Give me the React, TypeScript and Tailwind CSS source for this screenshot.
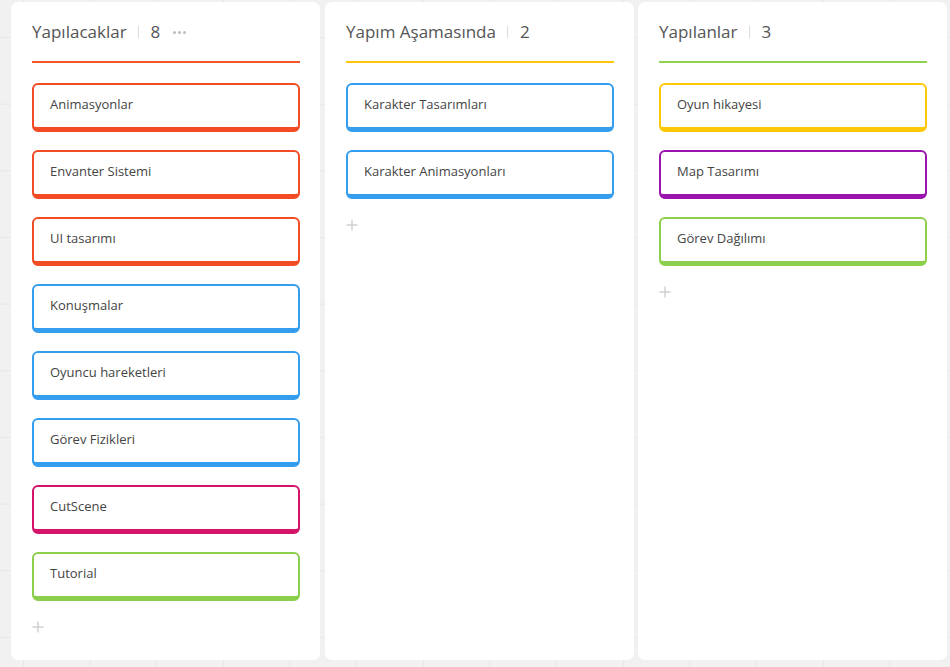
import React from "react";

type Card = { title: string; color: string };
type Column = { title: string; count: number; line: string; cards: Card[]; dots?: boolean; ml: string };

const RED = "border-[#f34b23]";
const BLUE = "border-[#349ded]";
const PINK = "border-[#d4136b]";
const GREEN = "border-[#8ccf4d]";
const YELLOW = "border-[#fcc808]";
const PURPLE = "border-[#9a14ad]";

const columns: Column[] = [
  {
    title: "Yapılacaklar",
    count: 8,
    line: "bg-[#f4562c]",
    dots: true,
    ml: "ml-0",
    cards: [
      { title: "Animasyonlar", color: RED },
      { title: "Envanter Sistemi", color: RED },
      { title: "UI tasarımı", color: RED },
      { title: "Konuşmalar", color: BLUE },
      { title: "Oyuncu hareketleri", color: BLUE },
      { title: "Görev Fizikleri", color: BLUE },
      { title: "CutScene", color: PINK },
      { title: "Tutorial", color: GREEN },
    ],
  },
  {
    title: "Yapım Aşamasında",
    count: 2,
    line: "bg-[#fdc60a]",
    ml: "ml-[5px]",
    cards: [
      { title: "Karakter Tasarımları", color: BLUE },
      { title: "Karakter Animasyonları", color: BLUE },
    ],
  },
  {
    title: "Yapılanlar",
    count: 3,
    line: "bg-[#8fd24f]",
    ml: "ml-[4px]",
    cards: [
      { title: "Oyun hikayesi", color: YELLOW },
      { title: "Map Tasarımı", color: PURPLE },
      { title: "Görev Dağılımı", color: GREEN },
    ],
  },
];

function Plus() {
  return (
    <svg width="12" height="12" viewBox="0 0 12 12" className="block">
      <path d="M6 0.5V11.5M0.5 6H11.5" stroke="#cfcfcf" strokeWidth="1.4" />
    </svg>
  );
}

function ColumnView({ col }: { col: Column }) {
  return (
    <div className={`${col.ml} w-[309px] h-[658px] shrink-0 bg-white rounded-[7px] pl-[21px] pr-[20px] pt-[18px] flex flex-col`}>
      <div className="flex items-center h-[24px] text-[17px] leading-[24px] text-[#555555]">
        <span>{col.title}</span>
        <span className="ml-[11px] w-px h-[12px] bg-[#dcdcdc]" />
        <span className="ml-[12px]">{col.count}</span>
        {col.dots && (
          <span className="ml-[13px] flex gap-[2px] items-center">
            <span className="w-[3px] h-[3px] rounded-full bg-[#bdbdbd]" />
            <span className="w-[3px] h-[3px] rounded-full bg-[#bdbdbd]" />
            <span className="w-[3px] h-[3px] rounded-full bg-[#bdbdbd]" />
          </span>
        )}
      </div>
      <div className={`mt-[17px] h-[2px] ${col.line}`} />
      <div className="mt-[20px] flex flex-col gap-[18px]">
        {col.cards.map((c) => (
          <div
            key={c.title}
            className={`h-[49px] box-border border-2 border-b-[5px] rounded-[6px] ${c.color} pl-[16px] pt-[9px] text-[13px] leading-[20px] text-[#444444]`}
          >
            {c.title}
          </div>
        ))}
      </div>
      <div className="mt-[20px]">
        <Plus />
      </div>
    </div>
  );
}

export default function App() {
  return (
    <div
      className="w-[950px] h-[667px] overflow-hidden bg-[#f1f1f1] bg-[linear-gradient(to_right,#e7e7e7_1px,transparent_1px),linear-gradient(to_bottom,#e7e7e7_1px,transparent_1px)] bg-[size:66.67px_66.67px] bg-[position:23px_37px] pl-[11px] pt-[2px] flex"
      style={{ fontFamily: '"Open Sans", "Noto Sans", sans-serif' }}
    >
      {columns.map((c) => (
        <ColumnView key={c.title} col={c} />
      ))}
    </div>
  );
}
